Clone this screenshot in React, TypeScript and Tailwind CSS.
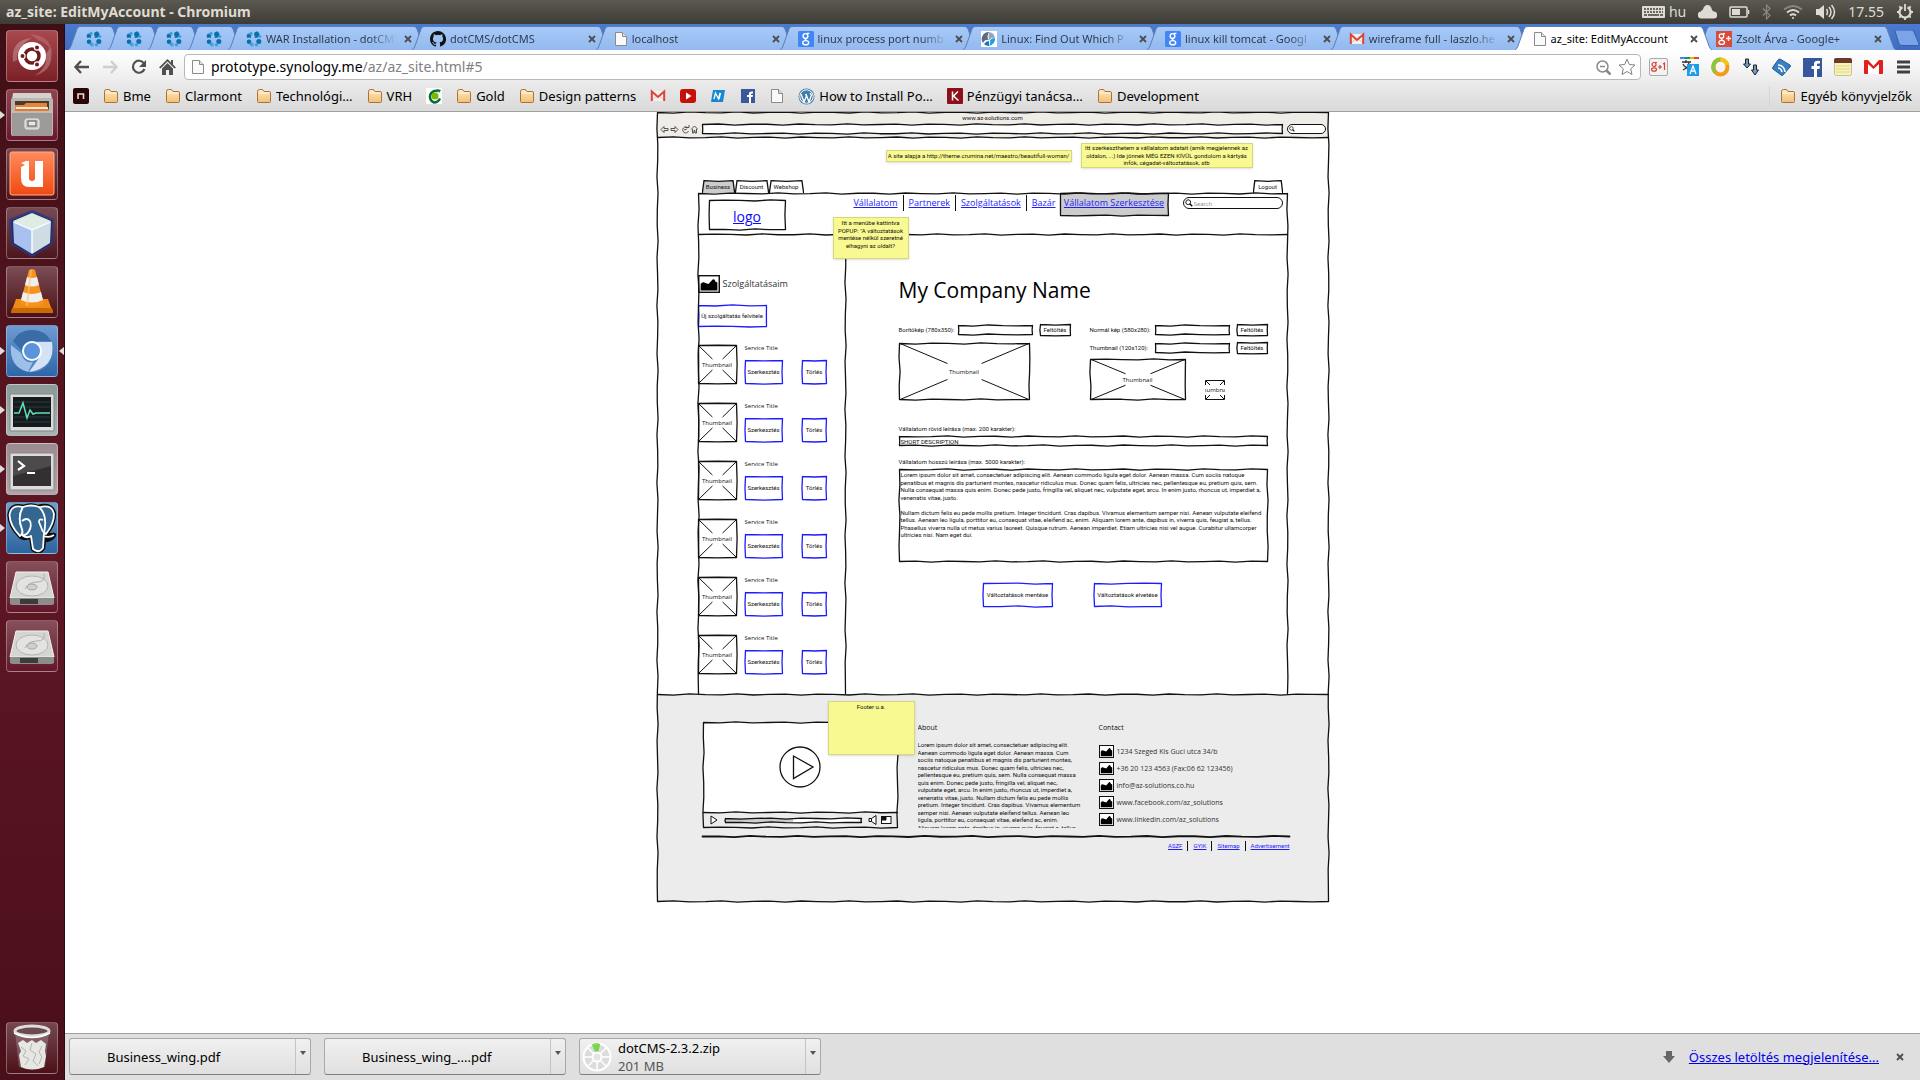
import { useLayoutEffect, useRef, useState } from "react";
import type { ReactNode } from "react";

/* ------------------------------------------------------------------ */
/* Small shared icons                                                   */
/* ------------------------------------------------------------------ */

const FolderIcon = () => (
  <svg width="16" height="16" viewBox="0 0 16 16" className="shrink-0">
    <defs>
      <linearGradient id="folder" x1="0" y1="0" x2="0" y2="1">
        <stop offset="0" stopColor="#fdeac0" />
        <stop offset="1" stopColor="#f3bf74" />
      </linearGradient>
    </defs>
    <path d="M1.5 13.5v-10q0-2 2-2h3l1.500 2h5q1.500 0 1.500 1.500v8.500q0 1-1 1h-11q-1 0-1-1z" fill="url(#folder)" stroke="#a8733a" />
    <path d="M2.500 5h11" stroke="#fff6dd" />
  </svg>
);

const PageIcon = () => (
  <svg width="14" height="16" viewBox="0 0 14 16" className="shrink-0">
    <path d="M1.500 1.500h7l4 4v9h-11z" fill="#fafafa" stroke="#8b8b8b" />
    <path d="M8.500 1.500v4h4" fill="#e2e2e2" stroke="#8b8b8b" />
  </svg>
);

const GmailIcon = () => (
  <svg width="16" height="16" viewBox="0 0 16 16" className="shrink-0">
    <path d="M1 3h14v10H1z" fill="#f4efe9" />
    <path d="M1 13l5.500-5M15 13L9.500 8" stroke="#d9c7bf" />
    <path d="M1.800 13V3.500L8 9l6.200-5.500V13" fill="none" stroke="#db4437" strokeWidth="2" />
  </svg>
);

const GoogleIcon = () => (
  <svg width="16" height="16" viewBox="0 0 16 16" className="shrink-0">
    <rect width="16" height="16" rx="1.500" fill="#4285f4" />
    <g fill="none" stroke="#fff" strokeWidth="1.400">
      <circle cx="7.500" cy="5" r="2.400" />
      <path d="M9 2.400h2.400M8 7.500q-1.500 1 .5 2" />
      <ellipse cx="7.700" cy="11.700" rx="3" ry="2.100" />
    </g>
  </svg>
);

const DotCmsIcon = () => (
  <svg width="16" height="16" viewBox="0 0 16 16" className="shrink-0">
    <g fill="#0b6fae">
      <path d="M8.500 1.500q3-2 4.500.5t-1 4.500L8.500 7q1-2-.5-3z" />
      <path d="M1.500 6q-2-2.500.5-4.500l4 1Q4 4 5.500 6 3 5 1.500 6z" transform="translate(0 1)" />
      <circle cx="3" cy="10.800" r="2.300" />
      <circle cx="12.800" cy="10.500" r="2.500" />
    </g>
    <g fill="#3fa3dd">
      <circle cx="5" cy="2.500" r="1.700" />
      <circle cx="13.800" cy="5.500" r="1.500" />
      <circle cx="5.700" cy="13.500" r="2" />
      <circle cx="10.500" cy="13.700" r="1.700" />
    </g>
  </svg>
);

const GithubIcon = () => (
  <svg width="16" height="16" viewBox="0 0 16 16" className="shrink-0">
    <path
      fill="#111"
      d="M8 0C3.580 0 0 3.580 0 8c0 3.540 2.290 6.530 5.470 7.590.4.070.55-.17.55-.38v-1.490c-2.010.37-2.530-.49-2.690-.94-.09-.23-.48-.94-.82-1.130-.28-.15-.68-.52-.01-.53.63-.01 1.080.58 1.230.82.72 1.210 1.870.87 2.330.66.07-.52.28-.87.51-1.070-1.780-.2-3.640-.89-3.640-3.950 0-.87.31-1.590.82-2.150-.08-.2-.36-1.020.08-2.120 0 0 .67-.21 2.200.82a7.400 7.400 0 014 0c1.530-1.040 2.200-.82 2.200-.82.44 1.100.16 1.920.08 2.120.51.56.82 1.270.82 2.150 0 3.070-1.870 3.750-3.650 3.950.29.25.54.73.54 1.480v2.200c0 .21.15.46.55.38A8 8 0 008 0z"
    />
  </svg>
);

const LinuxFindIcon = () => (
  <svg width="16" height="16" viewBox="0 0 16 16" className="shrink-0">
    <rect width="16" height="16" fill="#fff" />
    <path d="M2 12A7 7 0 018 1q-3 5 0 8-4-1-6 3z" fill="#5c6880" />
    <path d="M8 1a7 7 0 016 6q-3-1-6 2-1-4 0-8z" fill="#9aa4b5" />
    <path d="M14 7a7 7 0 01-7 8q3-1 2-6 2-2 5-2z" fill="#1ba1e2" />
    <path d="M3 13q2-3 5-3v5q-3 0-5-2z" fill="#1579b8" />
  </svg>
);

const GPlusIcon = () => (
  <svg width="16" height="16" viewBox="0 0 16 16" className="shrink-0">
    <rect width="16" height="16" fill="#dc4b39" />
    <g fill="none" stroke="#fff" strokeWidth="1.300">
      <circle cx="5.500" cy="5" r="2.200" />
      <path d="M7 2.600h2M6 7.300q-1.200 1 .5 2" />
      <ellipse cx="5.700" cy="11.400" rx="2.800" ry="2" />
      <path d="M10 7.500h5M12.500 5v5" />
    </g>
  </svg>
);

const CloseIcon = () => (
  <svg width="8" height="8" viewBox="0 0 8 8">
    <path d="M1 1l6 6M7 1L1 7" stroke="#4d4d4d" strokeWidth="1.800" />
  </svg>
);

/* ------------------------------------------------------------------ */
/* System panel                                                         */
/* ------------------------------------------------------------------ */

function SystemPanel() {
  return (
    <header className="flex h-6 items-center justify-between bg-linear-to-b from-[#5b5950] to-[#3e3c37] px-1.5 text-[#dfdbd2]">
      <h1 className="text-[14px] leading-6 font-bold">az_site: EditMyAccount - Chromium</h1>
      <div className="flex items-center gap-3 text-[14px] leading-6">
        <span className="flex items-center gap-1">
          <svg width="23" height="12" viewBox="0 0 23 12">
            <rect width="23" height="12" rx="1" fill="#dfdbd2" />
            <path d="M2 3h19M2 6h19" stroke="#45433d" strokeWidth="1.500" strokeDasharray="2 1" />
            <path d="M2 9h3M6 9h11M18 9h3" stroke="#45433d" strokeWidth="1.500" />
          </svg>
          hu
        </span>
        <svg width="19" height="16" viewBox="0 0 19 16">
          <path d="M3.500 14.500a3.500 3.500 0 01-.5-7q.5-1.500 2-2Q6 1 9.500 1t4.500 5q1 .5 1.500 1.500a3.500 3.500 0 01.5 7z" fill="#dfdbd2" />
        </svg>
        <svg width="21" height="12" viewBox="0 0 21 12">
          <rect x="1" y="1" width="17" height="10" rx="1" fill="none" stroke="#dfdbd2" strokeWidth="1.500" />
          <rect x="3" y="3" width="8" height="6" fill="#dfdbd2" />
          <path d="M19.500 4v4" stroke="#dfdbd2" strokeWidth="1.500" />
        </svg>
        <svg width="9" height="16" viewBox="0 0 9 16">
          <path d="M1 4.500l7 7L4.500 15V1L8 4.500l-7 7" fill="none" stroke="#8a877f" strokeWidth="1.200" />
        </svg>
        <svg width="20" height="16" viewBox="0 0 20 16" fill="none" stroke="#dfdbd2" strokeWidth="1.800">
          <path d="M1 5.500q9-7 18 0" stroke="#8a877f" />
          <path d="M4 8.500q6-5 12 0M7 11.500q3-2.500 6 0" />
          <circle cx="10" cy="14" r="1" fill="#dfdbd2" stroke="none" />
        </svg>
        <svg width="21" height="16" viewBox="0 0 21 16">
          <path d="M1 5h3l5-4v14l-5-4H1z" fill="#dfdbd2" />
          <path d="M11.500 5q2 3 0 6M14 3q4 5 0 10M16.500 1q6 7 0 14" fill="none" stroke="#dfdbd2" strokeWidth="1.500" />
        </svg>
        <time>17.55</time>
        <svg width="18" height="18" viewBox="0 0 18 18">
          <path d="M6.500 4.200a5.500 5.500 0 105 0" fill="none" stroke="#dfdbd2" strokeWidth="2.200" />
          <path d="M9 1v7M1 9h2M15 9h2M9 15v2M3.300 14.700l1.500-1.500M14.700 14.700l-1.500-1.500M3.300 3.300l1.500 1.500M14.700 3.300l-1.500 1.500" stroke="#dfdbd2" strokeWidth="1.800" />
        </svg>
      </div>
    </header>
  );
}

/* ------------------------------------------------------------------ */
/* Launcher                                                             */
/* ------------------------------------------------------------------ */

const UbuntuArt = () => (
  <svg width="52" height="52" viewBox="0 0 52 52">
    <path d="M7 32Q4 10 26 8Q10 16 11 30zM44 18q6 22-16 28 14-8 12-22z" fill="#fff" opacity=".25" />
    <path d="M24 4q24 2 22 24-1-14-14-18z" fill="#fff" opacity=".15" />
    <circle cx="26" cy="26" r="14" fill="#fff" />
    <circle cx="26" cy="26" r="7" fill="none" stroke="#6e1a20" strokeWidth="3.500" />
    <g fill="#6e1a20" stroke="#fff" strokeWidth="1.200">
      <circle cx="16.500" cy="26" r="2.600" />
      <circle cx="31" cy="17.500" r="2.600" />
      <circle cx="31" cy="34.500" r="2.600" />
    </g>
  </svg>
);

const FilesArt = () => (
  <svg width="52" height="52" viewBox="0 0 52 52">
    <path d="M7 4h38l2 13H5z" fill="#d4d2cf" />
    <rect x="5" y="9" width="42" height="38" rx="2" fill="#b9b7b4" />
    <rect x="9" y="12" width="34" height="12" fill="#4b3a2e" />
    <path d="M9 16h9l2-2h21v10H9z" fill="#e9833a" />
    <path d="M10 18h32v5H10z" fill="#fbe9d3" />
    <path d="M9 20h34v4H9z" fill="#e7772e" />
    <rect x="6" y="22" width="40" height="25" rx="2" fill="#9d9b98" />
    <path d="M6 23h40" stroke="#dedcda" />
    <rect x="19" y="30" width="14" height="10" rx="2" fill="#c8c6c4" stroke="#eee" />
    <rect x="22" y="32" width="8" height="5" fill="#e8e8e8" stroke="#555" />
  </svg>
);

const UbuntuOneArt = () => (
  <svg width="52" height="52" viewBox="0 0 52 52">
    <defs>
      <linearGradient id="u1" x1="0" y1="0" x2="0" y2="1">
        <stop offset="0" stopColor="#ff8a5c" />
        <stop offset="1" stopColor="#ef4a12" />
      </linearGradient>
    </defs>
    <rect x="4" y="4" width="44" height="43" rx="2" fill="url(#u1)" stroke="#ffb08c" />
    <path d="M15 15l5-2h3v17q0 3 3 3t3-3V13h8v26H23q-8 0-8-9V19l4-2z" fill="#fff" />
  </svg>
);

const CubeArt = () => (
  <svg width="52" height="52" viewBox="0 0 52 52">
    <path d="M26 4l21 9-1 24-20 12L6 37 4 13z" fill="#1d2a68" stroke="#26388a" strokeWidth="2" opacity=".8" />
    <path d="M26 6l19 8-19 9L7 14z" fill="#dfece6" />
    <path d="M7 14l19 9v24L8 36z" fill="#a9c1ee" />
    <path d="M45 14l-19 9v24l18-11z" fill="#cfdce4" />
    <path d="M26 23v23M8 15l18 8 18-8" stroke="#f7fbff" strokeWidth="1.500" fill="none" />
  </svg>
);

const VlcArt = () => (
  <svg width="52" height="52" viewBox="0 0 52 52">
    <path d="M10 33h32l5 14H5z" fill="#f08a14" />
    <path d="M5 47h42v-2l-1-3H6z" fill="#c96a05" />
    <path d="M23 4q3-2 6 0l9 34q-12 6-24 0z" fill="#f7921e" />
    <path d="M21 11q5 2 10 0l2 8q-7 3-14 0z" fill="#efefef" />
    <path d="M17 26q9 4 18 0l2 8q-11 5-22 0z" fill="#efefef" />
    <path d="M25 4l-4 36" stroke="#ffc47a" strokeWidth="2" opacity=".6" />
  </svg>
);

const ChromiumArt = () => (
  <svg width="52" height="52" viewBox="0 0 52 52">
    <circle cx="26" cy="26" r="21" fill="#4f86c6" />
    <path d="M7 16q6-11 19-11t19 11H26q-9 0-10 10z" fill="#3a6ca8" />
    <path d="M5 20q-2 22 17 27l5-10q-9 2-12-9z" fill="#9cc0e8" />
    <path d="M31 17h15q4 26-23 30l10-14q3-8-2-16z" fill="#d3e3f5" />
    <circle cx="26" cy="26" r="9" fill="#5b93dc" stroke="#fff" strokeWidth="2" />
  </svg>
);

const MonitorArt = () => (
  <svg width="52" height="52" viewBox="0 0 52 52">
    <rect x="4" y="10" width="44" height="37" rx="1" fill="#d9dcda" stroke="#7e8785" />
    <rect x="7" y="13" width="38" height="30" fill="#151a1c" />
    <path d="M8 18h36M8 23h36M8 33h36M8 38h36" stroke="#2e3a3c" />
    <path d="M8 29h5l4-10 4 15 3-8 3 4 3-1h14" fill="none" stroke="#5fe0b8" strokeWidth="1.500" />
  </svg>
);

const TerminalArt = () => (
  <svg width="52" height="52" viewBox="0 0 52 52">
    <rect x="4" y="10" width="44" height="37" rx="1" fill="#dedbdc" stroke="#8b8586" />
    <rect x="7" y="13" width="38" height="30" fill="#333031" />
    <path d="M7 13h38v10L7 33z" fill="#4d4a4b" />
    <path d="M12 18l6 5-6 4M21 30h8" fill="none" stroke="#fff" strokeWidth="2.200" />
  </svg>
);

const ElephantArt = () => (
  <svg width="52" height="52" viewBox="0 0 52 52" strokeLinejoin="round">
    <path
      d="M14 34Q4 24 3.500 13 5 2 17 5q8-3 15 0 14-4 16 7 0 10-8 20 3 2 8 1-3 5-10 5l-1 8q-4 6-10 1l-2-13q-8 4-11 0z"
      stroke="#0b0b0b"
      strokeWidth="4.500"
    />
    <g stroke="#fff" strokeWidth="1.800" fill="#336791">
      <path d="M33 5.500q13-4 15 6.500 0 10-8 20l-5-4z" />
      <path d="M14 34Q4 24 3.500 13 5 2 17 5q-6 10-1 22 2 4-2 7z" />
      <path d="M17 5q8-3 16 0 9 8 5 26l-1 15q-4 6-10 1l-2-13q-4 3-9-1 1-3 0-6-5-12 1-22z" />
      <path d="M16 19q5-4 8 0 2 5-1 10t-7 4M37 18q-4-2-4 2l4 10M37 34q7 2 11-1" fill="none" />
    </g>
  </svg>
);

const DriveArt = () => (
  <svg width="52" height="52" viewBox="0 0 52 52">
    <path d="M10 11h32l6 26H4z" fill="#d5d5d3" stroke="#f3f3f3" />
    <path d="M4 37h44v6l-2 1H6l-2-1z" fill="#8c8c8a" />
    <path d="M14 38h18v5H14z" fill="#3c3c3c" />
    <ellipse cx="26" cy="25" rx="16" ry="10" fill="#e3e3e1" stroke="#b5b5b3" />
    <ellipse cx="26" cy="26" rx="5" ry="3" fill="#cfcfcd" stroke="#a5a5a3" />
    <path d="M38 13q2 8-7 8t-12 7" fill="none" stroke="#b0b0ae" />
  </svg>
);

const TrashArt = () => (
  <svg width="52" height="52" viewBox="0 0 52 52">
    <path d="M9 10l4 35q13 5 26 0l4-35z" fill="#ddd" opacity=".25" />
    <path d="M12 21l5-3 4 3 5-3 4 3 5-3 5 4-1 7 1 5-2 11q-12 5-23 0l-2-12 2-4z" fill="#e6e6e3" />
    <path d="M15 25l5 4-3 5 6 3-4 6M26 21l-2 7 6 4-3 7 5 5M36 24l-3 6 3 5-3 7" fill="none" stroke="#b4b4b0" />
    <ellipse cx="26" cy="9" rx="17" ry="5" fill="#6b4a50" stroke="#dededc" strokeWidth="3" />
    <path d="M8 11q18 9 36 0" fill="none" stroke="#fff" strokeWidth="1.500" />
  </svg>
);

const launcher: { name: string; art: ReactNode; tile: string; running?: boolean; focused?: boolean }[] = [
  { name: "Dash", art: <UbuntuArt />, tile: "from-[#a8484f] to-[#7c2027]" },
  { name: "Files", art: <FilesArt />, tile: "from-[#8e4450] to-[#6b1630]", running: true },
  { name: "Ubuntu One", art: <UbuntuOneArt />, tile: "from-[#7a484c] to-[#51141c]" },
  { name: "VirtualBox", art: <CubeArt />, tile: "from-[#774b52] to-[#4d151d]" },
  { name: "VLC", art: <VlcArt />, tile: "from-[#7b4d54] to-[#4a0f18]" },
  { name: "Chromium", art: <ChromiumArt />, tile: "from-[#6f9bd0] to-[#2e66a8]", running: true, focused: true },
  { name: "System Monitor", art: <MonitorArt />, tile: "from-[#8b9997] to-[#a6b3b0]", running: true },
  { name: "Terminal", art: <TerminalArt />, tile: "from-[#9b8b90] to-[#b0a5a8]", running: true },
  { name: "pgAdmin", art: <ElephantArt />, tile: "from-[#6f9dc9] to-[#2b64a0]", running: true },
  { name: "Drive 1", art: <DriveArt />, tile: "from-[#86505a] to-[#64142a]" },
  { name: "Drive 2", art: <DriveArt />, tile: "from-[#86505a] to-[#64142a]" },
];

function Tile({ name, art, tile, running, focused }: (typeof launcher)[number]) {
  return (
    <div className="relative flex w-full justify-center">
      {running && (
        <svg width="5" height="8" viewBox="0 0 5 8" className="absolute top-5.5 left-0">
          <path d="M0 0l5 4-5 4z" fill="#ddd" />
        </svg>
      )}
      <button aria-label={name} className={`size-13 overflow-hidden rounded-sm border border-white/30 bg-linear-to-b ${tile}`}>
        <span className="-m-px block">{art}</span>
      </button>
      {focused && (
        <svg width="5" height="8" viewBox="0 0 5 8" className="absolute top-5.5 right-0">
          <path d="M5 0L0 4l5 4z" fill="#ddd" />
        </svg>
      )}
    </div>
  );
}

function Launcher() {
  return (
    <nav aria-label="Launcher" className="flex w-[65px] shrink-0 flex-col justify-between border-r border-[#2a0a10] bg-linear-to-b from-[#3f0f16] via-[#5e1724] to-[#4a0f19] pt-1.5 pb-1.5">
      <div className="flex flex-col gap-[7px]">
        {launcher.map((item) => (
          <Tile key={item.name} {...item} />
        ))}
      </div>
      <Tile name="Trash" art={<TrashArt />} tile="from-[#75474f] to-[#4d101a]" />
    </nav>
  );
}

/* ------------------------------------------------------------------ */
/* Browser tabs and toolbar                                             */
/* ------------------------------------------------------------------ */

function Tab({ icon, label, active }: { icon: ReactNode; label?: string; active?: boolean }) {
  const fill = active ? "#ffffff" : "url(#tabfill)";
  const mid = active ? "bg-white" : "bg-linear-to-b from-[#a6c9f8] to-[#93b9ee]";
  return (
    <div className={`relative -mr-[14px] flex h-6 ${active ? "z-10" : ""} ${label ? "w-[198px] shrink" : "w-[54px] shrink-0"}`}>
      <svg width="14" height="24" viewBox="0 0 14 24" className="shrink-0">
        <defs>
          <linearGradient id="tabfill" x1="0" y1="0" x2="0" y2="1">
            <stop offset="0" stopColor="#a6c9f8" />
            <stop offset="1" stopColor="#93b9ee" />
          </linearGradient>
        </defs>
        <path d="M0 24Q2 23 3 20L9 3Q10 .5 12 .5H14V24z" fill={fill} />
        <path d="M0 24Q2 23 3 20L9 3Q10 .5 12 .5H14" fill="none" stroke="#5b7fb5" />
      </svg>
      <div className={`flex min-w-0 flex-1 items-center border-t border-[#5b7fb5] ${mid}`}>
        <span className="ml-1 flex">{icon}</span>
        {label && (
          <>
            <a href="#tab" className={`ml-1 flex-1 overflow-hidden text-[11px] leading-4 whitespace-nowrap ${active ? "text-black" : "mask-r-from-80% text-[#2f3b4d]"}`}>
              {label}
            </a>
            <button aria-label="Close tab" className="ml-2 shrink-0">
              <CloseIcon />
            </button>
          </>
        )}
      </div>
      <svg width="14" height="24" viewBox="0 0 14 24" className="shrink-0">
        <path d="M14 24Q12 23 11 20L5 3Q4 .5 2 .5H0V24z" fill={fill} />
        <path d="M14 24Q12 23 11 20L5 3Q4 .5 2 .5H0" fill="none" stroke="#5b7fb5" />
      </svg>
    </div>
  );
}

function TabStrip() {
  return (
    <div className="flex items-end bg-linear-to-b from-[#4a7bd0] to-[#3f6cc0] pt-0.5 pl-[3px]">
      <Tab icon={<DotCmsIcon />} />
      <Tab icon={<DotCmsIcon />} />
      <Tab icon={<DotCmsIcon />} />
      <Tab icon={<DotCmsIcon />} />
      <Tab icon={<DotCmsIcon />} label="WAR Installation - dotCMS" />
      <Tab icon={<GithubIcon />} label="dotCMS/dotCMS" />
      <Tab icon={<PageIcon />} label="localhost" />
      <Tab icon={<GoogleIcon />} label="linux process port numb" />
      <Tab icon={<LinuxFindIcon />} label="Linux: Find Out Which P" />
      <Tab icon={<GoogleIcon />} label="linux kill tomcat - Googl" />
      <Tab icon={<GmailIcon />} label="wireframe full - laszlo.he" />
      <Tab icon={<PageIcon />} label="az_site: EditMyAccount" active />
      <Tab icon={<GPlusIcon />} label="Zsolt Árva - Google+" />
      <button aria-label="New tab" className="ml-3 shrink-0 self-center">
        <svg width="26" height="16" viewBox="0 0 26 16">
          <path d="M1 1q0-1 1-1h15q2 0 3 2l5 12q0 1.500-1 1.500H8q-2 0-3-2z" fill="#7ba4e8" stroke="#3a5fa8" />
        </svg>
      </button>
    </div>
  );
}

function Toolbar() {
  return (
    <div className="flex items-center bg-linear-to-b from-white to-[#ededed] pt-1 pr-2.5 pb-px pl-2">
      <div className="flex items-center gap-3">
        <button aria-label="Back">
          <svg width="17" height="16" viewBox="0 0 17 16" fill="none" stroke="#505050" strokeWidth="2.400">
            <path d="M8 2L2.500 8 8 14M3 8h13" />
          </svg>
        </button>
        <button aria-label="Forward">
          <svg width="17" height="16" viewBox="0 0 17 16" fill="none" stroke="#cfcfcf" strokeWidth="2.400">
            <path d="M9 2l5.500 6L9 14M14 8H1" />
          </svg>
        </button>
        <button aria-label="Reload">
          <svg width="16" height="16" viewBox="0 0 16 16">
            <path d="M13 4.500A6 6 0 1013.500 10" fill="none" stroke="#505050" strokeWidth="2.200" />
            <path d="M15 1v7H8z" fill="#505050" />
          </svg>
        </button>
        <button aria-label="Home">
          <svg width="17" height="16" viewBox="0 0 17 16" fill="#505050">
            <path d="M8.500 0L0 8.500l1.500 1 7-7 7 7 1.500-1-3-3V1h-2v2.500z" />
            <path d="M3 9.500l5.500-5.500L14 9.500V16h-4v-5H7v5H3z" />
          </svg>
        </button>
      </div>
      <div className="ml-2 flex h-[26px] flex-1 items-center rounded-sm border border-[#b8b8b8] bg-white pr-1 pl-1.5">
        <PageIcon />
        <div className="relative ml-1.5 flex-1 text-[14px] leading-5">
          <p aria-hidden="true" className="text-[#808080]">
            <span className="text-black">prototype.synology.me</span>/az/az_site.html#5
          </p>
          <input aria-label="Address" className="absolute inset-0 w-full bg-transparent outline-none" />
        </div>
        <svg width="17" height="17" viewBox="0 0 17 17" fill="none" stroke="#8a8a8a" strokeWidth="1.500">
          <circle cx="7.500" cy="7.500" r="5.500" />
          <path d="M5 7.500h5" />
          <path d="M11.500 11.500l4 4" strokeWidth="2.500" />
        </svg>
        <svg width="18" height="18" viewBox="0 0 18 18" className="ml-1.5" fill="#fff" stroke="#808080">
          <path d="M9 1.200l2.300 5.300 5.700.5-4.300 3.800 1.300 5.700-5-3-5 3 1.300-5.700L1 7l5.700-.5z" />
        </svg>
      </div>
      <div className="flex items-center gap-3 pl-2">
        <svg width="19" height="18" viewBox="0 0 19 18">
          <rect x=".5" y=".5" width="18" height="17" rx="1.500" fill="#f2f2f2" stroke="#aaa" />
          <g fill="none" stroke="#d6432f" strokeWidth="1.200">
            <circle cx="5" cy="6.500" r="2" />
            <ellipse cx="5" cy="11.500" rx="2.500" ry="1.700" />
            <path d="M6 4.500h2M9 9h4M11 7v4M14 6l1.500-1v7" />
          </g>
        </svg>
        <svg width="19" height="20" viewBox="0 0 19 20">
          <path d="M0 0h5v2H0z" fill="#4285f4" />
          <path d="M5 0h5v2H5z" fill="#0a9d58" />
          <path d="M10 0h4v2h-4z" fill="#f4b400" />
          <path d="M14 0h5v2h-5z" fill="#db4437" />
          <path d="M2 5h9M6 3v3M3 13q6-3 6-8M3 7q2 4 7 5" fill="none" stroke="#333" strokeWidth="1.300" />
          <rect x="7" y="7" width="12" height="12" fill="#1e9be9" />
          <path d="M10 17l3-8 3 8M11 14h4" fill="none" stroke="#fff" strokeWidth="1.300" />
        </svg>
        <svg width="19" height="20" viewBox="0 0 19 20" fill="none" strokeWidth="4">
          <ellipse cx="9.500" cy="10" rx="7" ry="7.500" stroke="#f49b1c" />
          <path d="M9.500 2.500A7 7.500 0 004 15" stroke="#8cc63f" />
          <path d="M9.500 2.500A7 7.500 0 0116 8" stroke="#f5c518" />
        </svg>
        <svg width="18" height="18" viewBox="0 0 18 18" fill="#6a9cc8" stroke="#222">
          <path d="M3.500 1h3v5h2L5 10 1.500 6h2z" />
          <path d="M11.500 7h3v5h2L13 17l-3.500-5h2z" />
        </svg>
        <svg width="19" height="18" viewBox="0 0 19 18">
          <path d="M8 1l10 6q1 1 0 2l-7 8q-1 1-2 0L1 11q-1-1 0-2l5-7q1-1 2-1z" fill="#3a7fc1" stroke="#235a94" />
          <path d="M6 7q6 0 7 7M6 10q3 0 4 4" fill="none" stroke="#fff" strokeWidth="1.500" />
        </svg>
        <svg width="19" height="19" viewBox="0 0 19 19">
          <rect width="19" height="19" fill="#36579b" />
          <path d="M11 19v-8H8.500V8H11V6q0-4 6-3v2.500q-3-.5-3 1V8h3l-.5 3H14v8z" fill="#fff" />
        </svg>
        <svg width="18" height="18" viewBox="0 0 18 18">
          <rect x=".5" y=".5" width="17" height="17" rx="2" fill="#f7f3b5" stroke="#c8c090" />
          <path d="M0 5V2q0-2 2-2h14q2 0 2 2v3z" fill="#6b3a2a" />
          <path d="M2 8h14M2 11h14M2 14h14" stroke="#ddd694" />
        </svg>
        <svg width="19" height="14" viewBox="0 0 19 14">
          <rect width="19" height="14" rx="1" fill="#e01f1f" />
          <path d="M4 0h11L9.500 6zM4 14V4l5.500 5L15 4v10z" fill="#fff" />
        </svg>
        <button aria-label="Menu" className="ml-0.5">
          <svg width="13" height="14" viewBox="0 0 13 14">
            <path d="M0 2h13M0 7h13M0 12h13" stroke="#404040" strokeWidth="2.800" />
          </svg>
        </button>
      </div>
    </div>
  );
}

function Bookmark({ icon, label }: { icon: ReactNode; label?: string }) {
  return (
    <a href="#bookmark" className="flex shrink-0 items-center gap-1 whitespace-nowrap">
      {icon}
      {label}
    </a>
  );
}

function BookmarksBar() {
  return (
    <nav aria-label="Bookmarks" className="flex h-[31px] items-center justify-between border-b border-[#a0a0a0] bg-linear-to-b from-[#ebebeb] to-[#dadada] pr-2 pl-2 text-[13px] leading-5 text-black">
      <div className="flex items-center gap-3.5">
        <Bookmark
          icon={
            <svg width="16" height="16" viewBox="0 0 16 16">
              <rect width="16" height="16" rx="2" fill="#2b0505" />
              <path d="M5 11V6h5.500v5" fill="none" stroke="#e8dada" strokeWidth="1.600" />
            </svg>
          }
        />
        <Bookmark icon={<FolderIcon />} label="Bme" />
        <Bookmark icon={<FolderIcon />} label="Clarmont" />
        <Bookmark icon={<FolderIcon />} label="Technológi…" />
        <Bookmark icon={<FolderIcon />} label="VRH" />
        <Bookmark
          icon={
            <svg width="16" height="16" viewBox="0 0 16 16">
              <rect width="16" height="16" fill="#fff" />
              <path d="M12 3A6 6 0 108 14.500q4 0 6-4" fill="none" stroke="#046a38" strokeWidth="2.500" />
              <circle cx="9" cy="8" r="3.500" fill="#76b900" />
              <path d="M11 1l4 1-2 3z" fill="#046a38" />
            </svg>
          }
        />
        <Bookmark icon={<FolderIcon />} label="Gold" />
        <Bookmark icon={<FolderIcon />} label="Design patterns" />
        <Bookmark icon={<GmailIcon />} />
        <Bookmark
          icon={
            <svg width="16" height="16" viewBox="0 0 16 16">
              <rect y="1" width="16" height="14" rx="3" fill="#c4110c" />
              <path d="M6 4.500L11.500 8 6 11.500z" fill="#fff" />
            </svg>
          }
        />
        <Bookmark
          icon={
            <svg width="16" height="16" viewBox="0 0 16 16">
              <path d="M3 2h12l-2 12H1z" fill="#1589d0" />
              <path d="M4 11l1.500-6 3 6L10 5M9 11l1.500-6" fill="none" stroke="#fff" strokeWidth="1.300" />
            </svg>
          }
        />
        <Bookmark
          icon={
            <svg width="16" height="16" viewBox="0 0 16 16">
              <rect x="1" y="1" width="14" height="14" fill="#3b5998" />
              <path d="M9 15V9H7V7h2V5.500Q9 3 13 3.500v2q-2-.3-2 .8V7h2l-.4 2H11v6z" fill="#fff" />
            </svg>
          }
        />
        <Bookmark icon={<PageIcon />} />
        <Bookmark
          icon={
            <svg width="17" height="17" viewBox="0 0 17 17">
              <circle cx="8.500" cy="8.500" r="8" fill="#3f7da6" />
              <circle cx="8.500" cy="8.500" r="6.700" fill="none" stroke="#fff" />
              <path d="M3 6l3 8 2.500-6-1-2M8 6l3 8 2.500-7-1.500-2" fill="none" stroke="#fff" strokeWidth="1.300" />
            </svg>
          }
          label="How to Install Po…"
        />
        <Bookmark
          icon={
            <svg width="16" height="16" viewBox="0 0 16 16">
              <rect width="16" height="16" rx="1" fill="#8d0f1b" />
              <path d="M5.500 3.500v9M11 3.500L6.500 8l5 4.500" fill="none" stroke="#fff" strokeWidth="1.500" />
            </svg>
          }
          label="Pénzügyi tanácsa…"
        />
        <Bookmark icon={<FolderIcon />} label="Development" />
      </div>
      <div className="border-l border-[#d0d4e4] pl-2.5">
        <Bookmark icon={<FolderIcon />} label="Egyéb könyvjelzők" />
      </div>
    </nav>
  );
}

/* ------------------------------------------------------------------ */
/* Hand-drawn wireframe parts                                           */
/* ------------------------------------------------------------------ */

type Side = "t" | "r" | "b" | "l";

/* A slightly wavy line from (x1,y1) to (x2,y2), as a marker would draw it. */
function wavy(x1: number, y1: number, x2: number, y2: number, seed: number) {
  const length = Math.hypot(x2 - x1, y2 - y1);
  const steps = Math.max(2, Math.round(length / 16));
  const nx = -(y2 - y1) / length;
  const ny = (x2 - x1) / length;
  let d = `M${x1} ${y1}`;
  for (let i = 1; i <= steps; i++) {
    const t = i / steps;
    const off = i === steps ? 0 : 0.6 * Math.sin(i * 2.3 + seed);
    d += `L${x1 + (x2 - x1) * t + nx * off} ${y1 + (y2 - y1) * t + ny * off}`;
  }
  return d;
}

function Outline({ sides = "trbl", color = "#111", width = 1.3 }: { sides?: string; color?: string; width?: number }) {
  const ref = useRef<SVGSVGElement>(null);
  const [size, setSize] = useState({ w: 0, h: 0 });

  useLayoutEffect(() => {
    const el = ref.current;
    if (!el) return;
    const measure = () => {
      const box = el.getBoundingClientRect();
      setSize({ w: box.width, h: box.height });
    };
    measure();
    const observer = new ResizeObserver(measure);
    observer.observe(el);
    return () => observer.disconnect();
  }, []);

  const { w, h } = size;
  const r = w - 0.5;
  const b = h - 0.5;
  const lines: Record<Side, () => string> = {
    t: () => wavy(0.5, 0.5, r, 0.5, w),
    r: () => wavy(r, 0.5, r, b, h + 1),
    b: () => wavy(r, b, 0.5, b, w + 2),
    l: () => wavy(0.5, b, 0.5, 0.5, h + 3),
  };
  const d = w > 1 ? (sides.split("") as Side[]).map((s) => lines[s]()).join("") : "";

  return (
    <svg ref={ref} aria-hidden="true" className="pointer-events-none absolute inset-0 size-full overflow-visible">
      <path d={d} fill="none" stroke={color} strokeWidth={width} strokeLinecap="round" strokeLinejoin="round" />
    </svg>
  );
}

function BlueButton({ children, className }: { children: ReactNode; className: string }) {
  return (
    <button className={`relative bg-white text-center whitespace-nowrap ${className}`}>
      <Outline color="#1c1cff" />
      {children}
    </button>
  );
}

function Note({ children, className }: { children?: ReactNode; className: string }) {
  return <p className={`border border-[#d6d67a] bg-[#f9f991] text-center leading-tight whitespace-nowrap shadow-sm ${className}`}>{children}</p>;
}

function Thumb({ className }: { className: string }) {
  return (
    <div className={`relative flex items-center justify-center bg-white leading-3 font-['Open_Sans',sans-serif] ${className}`}>
      <svg aria-hidden="true" className="absolute inset-0 size-full" viewBox="0 0 100 100" preserveAspectRatio="none">
        <path d="M1 1L37 36M99 1L63 36M1 99L37 64M99 99L63 64" stroke="#111" fill="none" vectorEffect="non-scaling-stroke" />
      </svg>
      <Outline />
      <span className="relative">Thumbnail</span>
    </div>
  );
}

function SketchTab({ label, active, className }: { label: string; active?: boolean; className: string }) {
  return (
    <a href="#section" className={`relative flex h-[13px] items-center justify-center ${className}`}>
      <svg aria-hidden="true" className="absolute inset-0 size-full" viewBox="0 0 100 40" preserveAspectRatio="none">
        <path d="M1 40L6 2 50 4 94 2 99 40" fill={active ? "#ccc" : "#fff"} stroke="#111" strokeWidth="1.300" vectorEffect="non-scaling-stroke" />
      </svg>
      <span className="relative">{label}</span>
    </a>
  );
}

const Chart = ({ className }: { className: string }) => (
  <svg viewBox="0 0 21 18" className={`shrink-0 ${className}`} preserveAspectRatio="none">
    <rect x=".7" y=".7" width="19.600" height="16.600" fill="#fff" stroke="#111" strokeWidth="1.400" />
    <path d="M2.500 15.500V9q2-3 4.500-1l3 1 4-4.500q2-1 2.500 2l2 1v8z" fill="#000" />
  </svg>
);

function UploadRow({ id, label, labelWidth }: { id: string; label: string; labelWidth: string }) {
  return (
    <div className="flex h-3 items-center">
      <label htmlFor={id} className={`shrink-0 whitespace-nowrap ${labelWidth}`}>
        {label}
      </label>
      <div className="relative h-2.5 w-[75px]">
        <input id={id} className="block size-full bg-white px-1 outline-none" />
        <Outline />
      </div>
      <button className="relative ml-[7px] h-3 w-[31px] text-center">
        <Outline />
        Feltöltés
      </button>
    </div>
  );
}

const Search = ({ className }: { className: string }) => (
  <svg viewBox="0 0 10 10" className={`absolute ${className}`} fill="none" stroke="#111">
    <circle cx="4" cy="4" r="3" strokeWidth="1.200" />
    <path d="M6 6l3 3" strokeWidth="2" />
  </svg>
);

function MockBrowserBar() {
  return (
    <div className="relative h-[26px] bg-[#f0ede8]">
      <p className="text-center leading-3">www.az-solutions.com</p>
      <div className="flex items-center px-[3px]">
        <svg width="38" height="9" viewBox="0 0 38 9" fill="none" stroke="#444" strokeWidth=".9" className="mr-1">
          <path d="M1 4.500L4 1.500v2h4v2H4v2zM18 4.500l-3-3v2h-4v2h4v2z" />
          <path d="M28 3a3 3 0 10.500 3M25 2.500h4V0M24 5l3-1" />
          <path d="M31 4.500L34.500 1 38 4.500M32.500 4v4h1.500V5.500h1V8h1.500V4" />
        </svg>
        <div className="relative h-2.5 flex-1">
          <input aria-label="Prototype address" className="block size-full bg-white px-1 outline-none" />
          <Outline />
        </div>
        <div className="relative ml-1 h-2.5 w-[39px]">
          <input aria-label="Prototype search" className="block size-full rounded-full border border-[#111] bg-white px-2.5 outline-none" />
          <Search className="top-0.5 left-0.5 size-1.5" />
        </div>
      </div>
      <Outline sides="b" />
    </div>
  );
}

const NavSep = () => <span aria-hidden="true" className="h-4 w-px bg-[#111]" />;

function MockHeader() {
  return (
    <div className="relative flex h-[42px] items-start bg-white">
      <Outline sides="b" />
      <a href="#logo" className="relative mt-[7px] ml-[11px] flex h-[30px] w-[77px] items-center justify-center pt-1 font-['Open_Sans',sans-serif] text-[14px] text-[#0a0aff] underline">
        <Outline />
        logo
      </a>
      <nav aria-label="Prototype" className="ml-auto flex items-start font-['Open_Sans',sans-serif] text-[9px] leading-5 text-[#1c1cff]">
        <div className="flex h-5 items-center gap-[5px] pr-1">
          <a href="#v" className="underline">Vállalatom</a>
          <NavSep />
          <a href="#p" className="underline">Partnerek</a>
          <NavSep />
          <a href="#s" className="underline">Szolgáltatások</a>
          <NavSep />
          <a href="#b" className="underline">Bazár</a>
        </div>
        <a href="#vs" className="relative h-[23px] w-[109px] bg-[#ccc] text-center underline">
          <Outline />
          Vállalatom Szerkesztése
        </a>
      </nav>
      <div className="relative mt-1 mr-[5px] ml-3.5 h-3 w-[100px]">
        <input aria-label="Search" placeholder="Search" className="block size-full rounded-full border border-[#111] bg-white pl-2.5 text-[6px] outline-none placeholder:text-[#999]" />
        <Search className="top-0.5 left-0.5 size-2" />
      </div>
      <Note className="absolute top-6 left-[135px] z-10 h-[42px] w-[76px] pt-px">
        Itt a menübe kattintva
        <br />
        POPUP: "A változtatások
        <br />
        mentése nélkül szeretné
        <br />
        elhagyni az oldalt?
      </Note>
    </div>
  );
}

function Services() {
  return (
    <aside className="relative w-[148px] shrink-0 pt-10 pb-5">
      <Outline sides="r" />
      <h2 className="flex items-center gap-[3px] font-['Open_Sans',sans-serif] text-[9px] leading-[18px] text-[#333]">
        <Chart className="h-[18px] w-[22px]" />
        Szolgáltatásaim
      </h2>
      <BlueButton className="mt-3 block h-[22px] w-[69px]">Új szolgáltatás felvitele</BlueButton>
      <ul className="mt-[18px] flex flex-col gap-[19px]">
        {[1, 2, 3, 4, 5, 6].map((n) => (
          <li key={n} className="flex gap-2">
            <Thumb className="h-[39px] w-[39px]" />
            <div className="flex flex-col justify-between">
              <h3 className="font-['Open_Sans',sans-serif] leading-[7px]">Service Title</h3>
              <div className="flex gap-[19px]">
                <BlueButton className="h-6 w-[38px]">Szerkesztés</BlueButton>
                <BlueButton className="h-6 w-[25px]">Törlés</BlueButton>
              </div>
            </div>
          </li>
        ))}
      </ul>
    </aside>
  );
}

const longDescription = [
  "Lorem ipsum dolor sit amet, consectetuer adipiscing elit. Aenean commodo ligula eget dolor. Aenean massa. Cum sociis natoque",
  "penatibus et magnis dis parturient montes, nascetur ridiculus mus. Donec quam felis, ultricies nec, pellentesque eu, pretium quis, sem.",
  "Nulla consequat massa quis enim. Donec pede justo, fringilla vel, aliquet nec, vulputate eget, arcu. In enim justo, rhoncus ut, imperdiet a,",
  "venenatis vitae, justo.",
  "",
  "Nullam dictum felis eu pede mollis pretium. Integer tincidunt. Cras dapibus. Vivamus elementum semper nisi. Aenean vulputate eleifend",
  "tellus. Aenean leo ligula, porttitor eu, consequat vitae, eleifend ac, enim. Aliquam lorem ante, dapibus in, viverra quis, feugiat a, tellus.",
  "Phasellus viverra nulla ut metus varius laoreet. Quisque rutrum. Aenean imperdiet. Etiam ultricies nisi vel augue. Curabitur ullamcorper",
  "ultricies nisi. Nam eget dui.",
].join("\n");

function CompanyForm() {
  return (
    <form className="min-w-0 flex-1 pt-[41px] pr-5 pl-[53px]">
      <h2 className="font-['Open_Sans',sans-serif] text-[21px] leading-7 text-black">My Company Name</h2>
      <div className="mt-5 flex">
        <div className="flex w-[191px] flex-col justify-between">
          <UploadRow id="cover" label="Borítókép (780x350):" labelWidth="w-[59px]" />
          <Thumb className="h-[57px] w-[131px]" />
        </div>
        <div className="flex-1">
          <div className="flex flex-col gap-1.5">
            <UploadRow id="normal" label="Normál kép (580x280):" labelWidth="w-[65px]" />
            <UploadRow id="thumb" label="Thumbnail (120x120):" labelWidth="w-[65px]" />
          </div>
          <div className="mt-[5px] flex items-end gap-[19px]">
            <Thumb className="h-[41px] w-24" />
            <div className="relative flex size-5 items-center justify-center overflow-hidden font-['Open_Sans',sans-serif] leading-3">
              <svg aria-hidden="true" viewBox="0 0 20 20" className="absolute inset-0 size-full" fill="none" stroke="#111">
                <path d="M.5 5V.5h19V5M.5 15v4.500h19V15M1 1l4 4M19 1l-4 4M1 19l4-4M19 19l-4-4" />
              </svg>
              <span className="relative">Thumbnail</span>
            </div>
          </div>
        </div>
      </div>
      <label htmlFor="short" className="mt-[25px] block leading-[7px]">
        Vállalatom rövid leírása (max. 200 karakter):
      </label>
      <div className="relative mt-1 h-2.5">
        <input id="short" defaultValue="SHORT DESCRIPTION" className="block size-full bg-white pl-0.5 outline-none" />
        <Outline />
      </div>
      <label htmlFor="long" className="mt-3 block leading-[7px]">
        Vállalatom hosszú leírása (max. 5000 karakter):
      </label>
      <div className="relative mt-1">
        <textarea id="long" defaultValue={longDescription} className="block h-[93px] w-full resize-none overflow-hidden bg-white pt-0.5 pl-0.5 leading-tight whitespace-pre outline-none" />
        <Outline />
      </div>
      <div className="mt-[21px] flex gap-[41px] pl-[84px]">
        <BlueButton className="h-6 w-[70px]">Változtatások mentése</BlueButton>
        <BlueButton className="h-6 w-[68px]">Változtatások elvetése</BlueButton>
      </div>
    </form>
  );
}

const about = [
  "Lorem ipsum dolor sit amet, consectetuer adipiscing elit.",
  "Aenean commodo ligula eget dolor. Aenean massa. Cum",
  "sociis natoque penatibus et magnis dis parturient montes,",
  "nascetur ridiculus mus. Donec quam felis, ultricies nec,",
  "pellentesque eu, pretium quis, sem. Nulla consequat massa",
  "quis enim. Donec pede justo, fringilla vel, aliquet nec,",
  "vulputate eget, arcu. In enim justo, rhoncus ut, imperdiet a,",
  "venenatis vitae, justo. Nullam dictum felis eu pede mollis",
  "pretium. Integer tincidunt. Cras dapibus. Vivamus elementum",
  "semper nisi. Aenean vulputate eleifend tellus. Aenean leo",
  "ligula, porttitor eu, consequat vitae, eleifend ac, enim.",
  "Aliquam lorem ante, dapibus in, viverra quis, feugiat a, tellus.",
].join("\n");

const contacts = [
  "1234 Szeged Kis Guci utca 34/b",
  "+36 20 123 4563 (Fax:06 62 123456)",
  "info@az-solutions.co.hu",
  "www.facebook.com/az_solutions",
  "www.linkedin.com/az_solutions",
];

function VideoPlayer() {
  return (
    <div className="relative flex h-[106px] w-[195px] shrink-0 flex-col bg-white">
      <div className="flex flex-1 items-center justify-center">
        <button aria-label="Play video">
          <svg width="42" height="42" viewBox="0 0 42 42" fill="#fff" stroke="#111" strokeWidth="1.300">
            <circle cx="21" cy="21" r="20" />
            <path d="M14.500 10v22.500L34 21z" />
          </svg>
        </button>
      </div>
      <div className="relative flex h-4 items-center gap-1.5 bg-[#ececec] px-1.5">
        <Outline sides="t" />
        <svg width="10" height="10" viewBox="0 0 10 10" fill="#fff" stroke="#111">
          <path d="M2 1v8l6-4z" />
        </svg>
        <div className="relative h-[5px] flex-1 bg-linear-to-r from-[#ccc] from-50% to-white to-50%">
          <Outline />
        </div>
        <svg width="24" height="10" viewBox="0 0 24 10" fill="#fff" stroke="#111">
          <path d="M1 3.500h2.500L8 .5v9L3.500 6.500H1zM3.500 3.500v3" />
          <rect x="13.500" y="1.500" width="9.500" height="7" />
          <path d="M14 2h4v3h-4z" fill="#111" />
        </svg>
      </div>
      <Outline />
    </div>
  );
}

function MockFooter() {
  return (
    <footer className="relative bg-[#ececec] pt-7 pr-[39px] pb-[50px] pl-[45px]">
      <Outline sides="t" />
      <div className="flex pl-px">
        <VideoPlayer />
        <section className="ml-5 h-[106px] w-[165px] overflow-hidden">
          <h3 className="font-['Open_Sans',sans-serif] text-[7px] leading-3">About</h3>
          <p className="mt-[7px] leading-tight whitespace-pre">{about}</p>
        </section>
        <section className="ml-4">
          <h3 className="font-['Open_Sans',sans-serif] text-[7px] leading-3">Contact</h3>
          <ul className="mt-[11px] flex flex-col gap-1 font-['Open_Sans',sans-serif] text-[7px] leading-[13px] text-[#333]">
            {contacts.map((c) => (
              <li key={c} className="flex items-center gap-[3px] whitespace-nowrap">
                <Chart className="h-[13px] w-[15px]" />
                {c}
              </li>
            ))}
          </ul>
        </section>
      </div>
      <div className="relative mt-2 h-0.5">
        <Outline sides="t" width={1.8} />
      </div>
      <nav aria-label="Footer" className="flex items-center justify-end gap-[5px] pt-0.5 leading-3 text-[#1c1cff]">
        <a href="#aszf" className="underline">ASZF</a>
        <span className="h-2.5 w-px bg-[#111]" />
        <a href="#gyik" className="underline">GYIK</a>
        <span className="h-2.5 w-px bg-[#111]" />
        <a href="#sitemap" className="underline">Sitemap</a>
        <span className="h-2.5 w-px bg-[#111]" />
        <a href="#ad" className="underline">Advertisement</a>
      </nav>
      <Note className="absolute top-[7px] left-[171px] h-[54px] w-[87px] pt-px">Footer u.a.</Note>
    </footer>
  );
}

function Mockup() {
  return (
    <article className="relative mx-auto w-full max-w-[672px] bg-white font-[Roboto,sans-serif] text-[6px] leading-[8px] text-[#111]">
      <MockBrowserBar />
      <div className="px-[41px]">
        <div className="flex items-center justify-end gap-[9px] pt-[5px] pr-[35px]">
          <Note className="h-3 w-[186px] pt-px">A site alapja a http://theme.crumina.net/maestro/beautifull-woman/</Note>
          <Note className="h-[25px] w-[172px]">
            Itt szerkeszthetem a vállalatom adatait (amik megjelennek az
            <br />
            oldalon, ...) Ide jönnek MÉG EZEN KÍVÜL gondolom a kártyás
            <br />
            infók, cégadat-változtatások, stb
          </Note>
        </div>
        <nav aria-label="Sections" className="mt-3 flex pr-[5px] pl-1">
          <SketchTab label="Business" active className="w-[33px]" />
          <SketchTab label="Discount" className="w-[34px]" />
          <SketchTab label="Webshop" className="w-[35px]" />
          <SketchTab label="Logout" className="ml-auto w-[30px]" />
        </nav>
        <div className="relative">
          <MockHeader />
          <div className="flex">
            <Services />
            <CompanyForm />
          </div>
          <Outline sides="trl" />
        </div>
      </div>
      <MockFooter />
      <Outline />
    </article>
  );
}

/* ------------------------------------------------------------------ */
/* Download shelf                                                       */
/* ------------------------------------------------------------------ */

function Download({ name, size }: { name: string; size?: string }) {
  return (
    <div className="flex h-[37px] w-[242px] rounded-[3px] border border-[#a8a8a8] border-b-[#808080] bg-linear-to-b from-[#f0f0f0] to-[#e0e0e0]">
      <button className={`flex flex-1 items-center text-left ${size ? "pl-0.5" : "pl-[37px]"}`}>
        {size && (
          <svg width="30" height="30" viewBox="0 0 30 30" className="mr-1.5">
            <circle cx="15" cy="15" r="13.500" fill="#dcdcdc" stroke="#fff" strokeWidth="2" />
            <path d="M15 15L9.500 2.500Q15 0 18 2z" fill="#8be065" />
            <path d="M15 2v26M2 15h26M6 6l18 18M24 6L6 24" stroke="#fff" strokeWidth="1.500" />
            <path d="M11 3l4 11 3-11.500q-4-1-7 .5z" fill="#79d650" />
            <circle cx="15" cy="15" r="4.500" fill="#e4e4e4" stroke="#fff" strokeWidth="2" />
          </svg>
        )}
        <span>
          <span className="block">{name}</span>
          {size && <span className="block text-[#555]">{size}</span>}
        </span>
      </button>
      <button aria-label={`Options for ${name}`} className="flex w-[15px] justify-center border-l border-[#c4c4c4] pt-3">
        <svg width="6" height="4" viewBox="0 0 6 4">
          <path d="M0 0h6L3 4z" fill="#555" />
        </svg>
      </button>
    </div>
  );
}

function DownloadShelf() {
  return (
    <footer className="flex h-[47px] shrink-0 items-center justify-between border-t border-[#a0a0a0] bg-[#dfdfdf] pr-4 pb-px pl-1 text-[13px] leading-[18px] text-black">
      <div className="flex gap-[13px]">
        <Download name="Business_wing.pdf" />
        <Download name="Business_wing_....pdf" />
        <Download name="dotCMS-2.3.2.zip" size="201 MB" />
      </div>
      <div className="flex items-center">
        <svg width="12" height="12" viewBox="0 0 12 12" className="mr-3.5">
          <path d="M3 0h6v5h3l-6 7-6-7h3z" fill="#666" />
        </svg>
        <a href="#downloads" className="text-[#0000ee] underline">Összes letöltés megjelenítése...</a>
        <button aria-label="Close downloads" className="ml-[17px]">
          <CloseIcon />
        </button>
      </div>
    </footer>
  );
}

export default function App() {
  return (
    <div className="flex h-screen flex-col overflow-hidden bg-white font-['Noto_Sans',sans-serif]">
      <SystemPanel />
      <div className="flex min-h-0 flex-1">
        <Launcher />
        <div className="flex min-w-0 flex-1 flex-col">
          <TabStrip />
          <Toolbar />
          <BookmarksBar />
          <main className="min-h-0 flex-1 overflow-auto">
            <Mockup />
          </main>
          <DownloadShelf />
        </div>
      </div>
    </div>
  );
}
